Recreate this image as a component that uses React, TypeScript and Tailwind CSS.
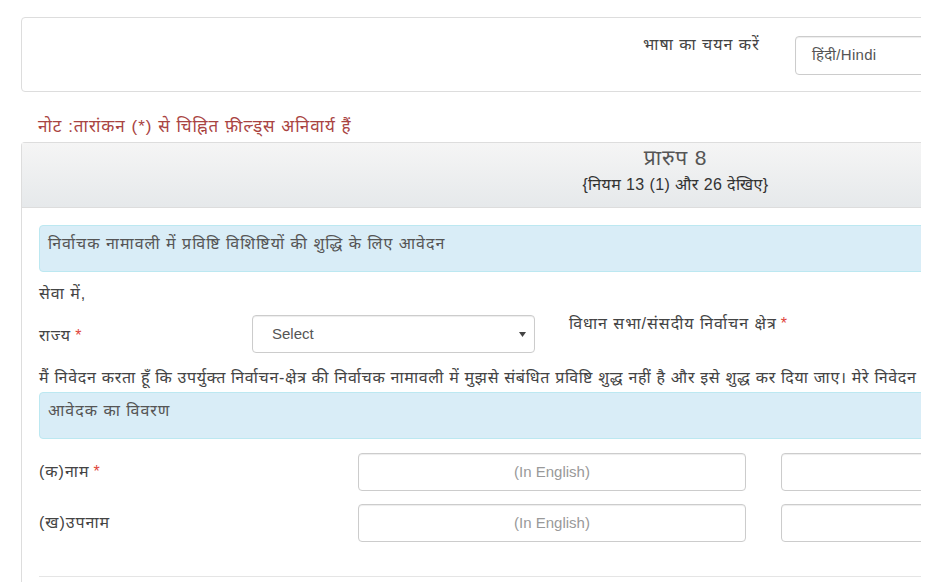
import React from 'react'

const font = { fontFamily: '"Liberation Sans", "Noto Sans", Arial, sans-serif' }

// devanagari in the reference runs wider than our fallback font
const hi = 'text-[16px] tracking-[1px]'

function Star() {
  return <span className="text-[#e0443a] ml-1 tracking-normal">*</span>
}

function SelectBox({ value, className }: { value: React.ReactNode; className: string }) {
  return (
    <div
      className={`flex items-center justify-between border border-[#ccc] rounded-[4px] bg-white shadow-[inset_0_1px_1px_rgba(0,0,0,0.075)] ${className}`}
    >
      <span className="text-[15px] text-[#555]">{value}</span>
      <svg width="7" height="5" viewBox="0 0 7 5" className="mr-[8px]">
        <path d="M0 0h7L3.5 5z" fill="#444" />
      </svg>
    </div>
  )
}

function TextBox({ placeholder }: { placeholder?: string }) {
  return (
    <div className="w-[388px] h-[38px] flex items-center justify-center border border-[#ccc] rounded-[4px] bg-white shadow-[inset_0_1px_1px_rgba(0,0,0,0.075)]">
      <span className="text-[15px] text-[#999]">{placeholder}</span>
    </div>
  )
}

function InfoBar({ children }: { children: React.ReactNode }) {
  return (
    <div className={`h-[47px] border border-[#bce8f1] rounded-[4px] bg-[#d9edf7] px-[8px] pt-[6px] text-[#555] ${hi}`}>
      {children}
    </div>
  )
}

export default function App() {
  return (
    <div className="w-[921px] h-[583px] overflow-hidden bg-white text-[#333]" style={font}>
      <div className="w-[1330px] pl-[21px] pt-[17px]">
        {/* Language picker */}
        <div className="h-[75px] border border-[#ddd] rounded-[4px] flex items-start pt-[18px] pl-[621px]">
          <span className={`w-[152px] mt-[-3px] text-[#444] ${hi}`}>भाषा का चयन करें</span>
          <SelectBox
            value={<span className="tracking-[0.3px]">हिंदी/Hindi</span>}
            className="w-[200px] h-[39px] pl-[16px]"
          />
        </div>

        <p className="mt-[24px] ml-[17px] text-[#a94442] leading-[22px] text-[17px] tracking-[1px]">
          नोट :तारांकन (*) से चिह्नित फ़ील्ड्स अनिवार्य हैं
        </p>

        {/* Form panel */}
        <div className="mt-[4px] border border-[#ddd] border-b-0 rounded-t-[4px] h-[440px]">
          <div className="h-[65px] bg-gradient-to-b from-[#f5f5f5] to-[#e6e9eb] border-b border-[#ddd] flex flex-col items-center pt-[1px]">
            <span className="text-[21px] tracking-[0.8px] text-[#555] leading-[28px]">प्रारुप 8</span>
            <span className="text-[16px] tracking-[0.4px] text-[#333] leading-[20px] mt-[3px]">
              {'{नियम 13 (1) और 26 देखिए}'}
            </span>
          </div>

          <div className="pl-[17px] pt-[17px]">
            <InfoBar>निर्वाचक नामावली में प्रविष्टि विशिष्टियों की शुद्धि के लिए आवेदन</InfoBar>

            <p className={`mt-[12px] text-[#444] leading-[20px] ${hi}`}>सेवा में,</p>

            <div className="mt-[11px] flex items-start">
              <span className={`w-[213px] mt-[9px] text-[#444] ${hi}`}>
                राज्य<Star />
              </span>
              <SelectBox value="Select" className="w-[283px] h-[38px] pl-[19px]" />
              <span className={`ml-[34px] mt-[-3px] text-[#444] ${hi}`}>
                विधान सभा/संसदीय निर्वाचन क्षेत्र<Star />
              </span>
            </div>

            <p className="mt-[15px] text-[#444] leading-[20px] whitespace-nowrap text-[16px] tracking-[0.7px]">
              मैं निवेदन करता हूँ कि उपर्युक्त निर्वाचन-क्षेत्र की निर्वाचक नामावली में मुझसे संबंधित प्रविष्टि शुद्ध नहीं है और इसे शुद्ध कर दिया जाए। मेरे निवेदन के ब्यौरे नीचे दिए गए हैं।
            </p>

            <div className="mt-[4px]">
              <InfoBar>आवेदक का विवरण</InfoBar>
            </div>

            <div className="mt-[14px] flex items-center">
              <span className={`w-[319px] text-[#444] ${hi}`}>
                (क)नाम<Star />
              </span>
              <TextBox placeholder="(In English)" />
              <div className="ml-[35px]">
                <TextBox />
              </div>
            </div>

            <div className="mt-[13px] flex items-center">
              <span className={`w-[319px] text-[#444] ${hi}`}>(ख)उपनाम</span>
              <TextBox placeholder="(In English)" />
              <div className="ml-[35px]">
                <TextBox />
              </div>
            </div>

            <div className="mt-[34px] border-t border-[#e5e5e5]" />
          </div>
        </div>
      </div>
    </div>
  )
}
